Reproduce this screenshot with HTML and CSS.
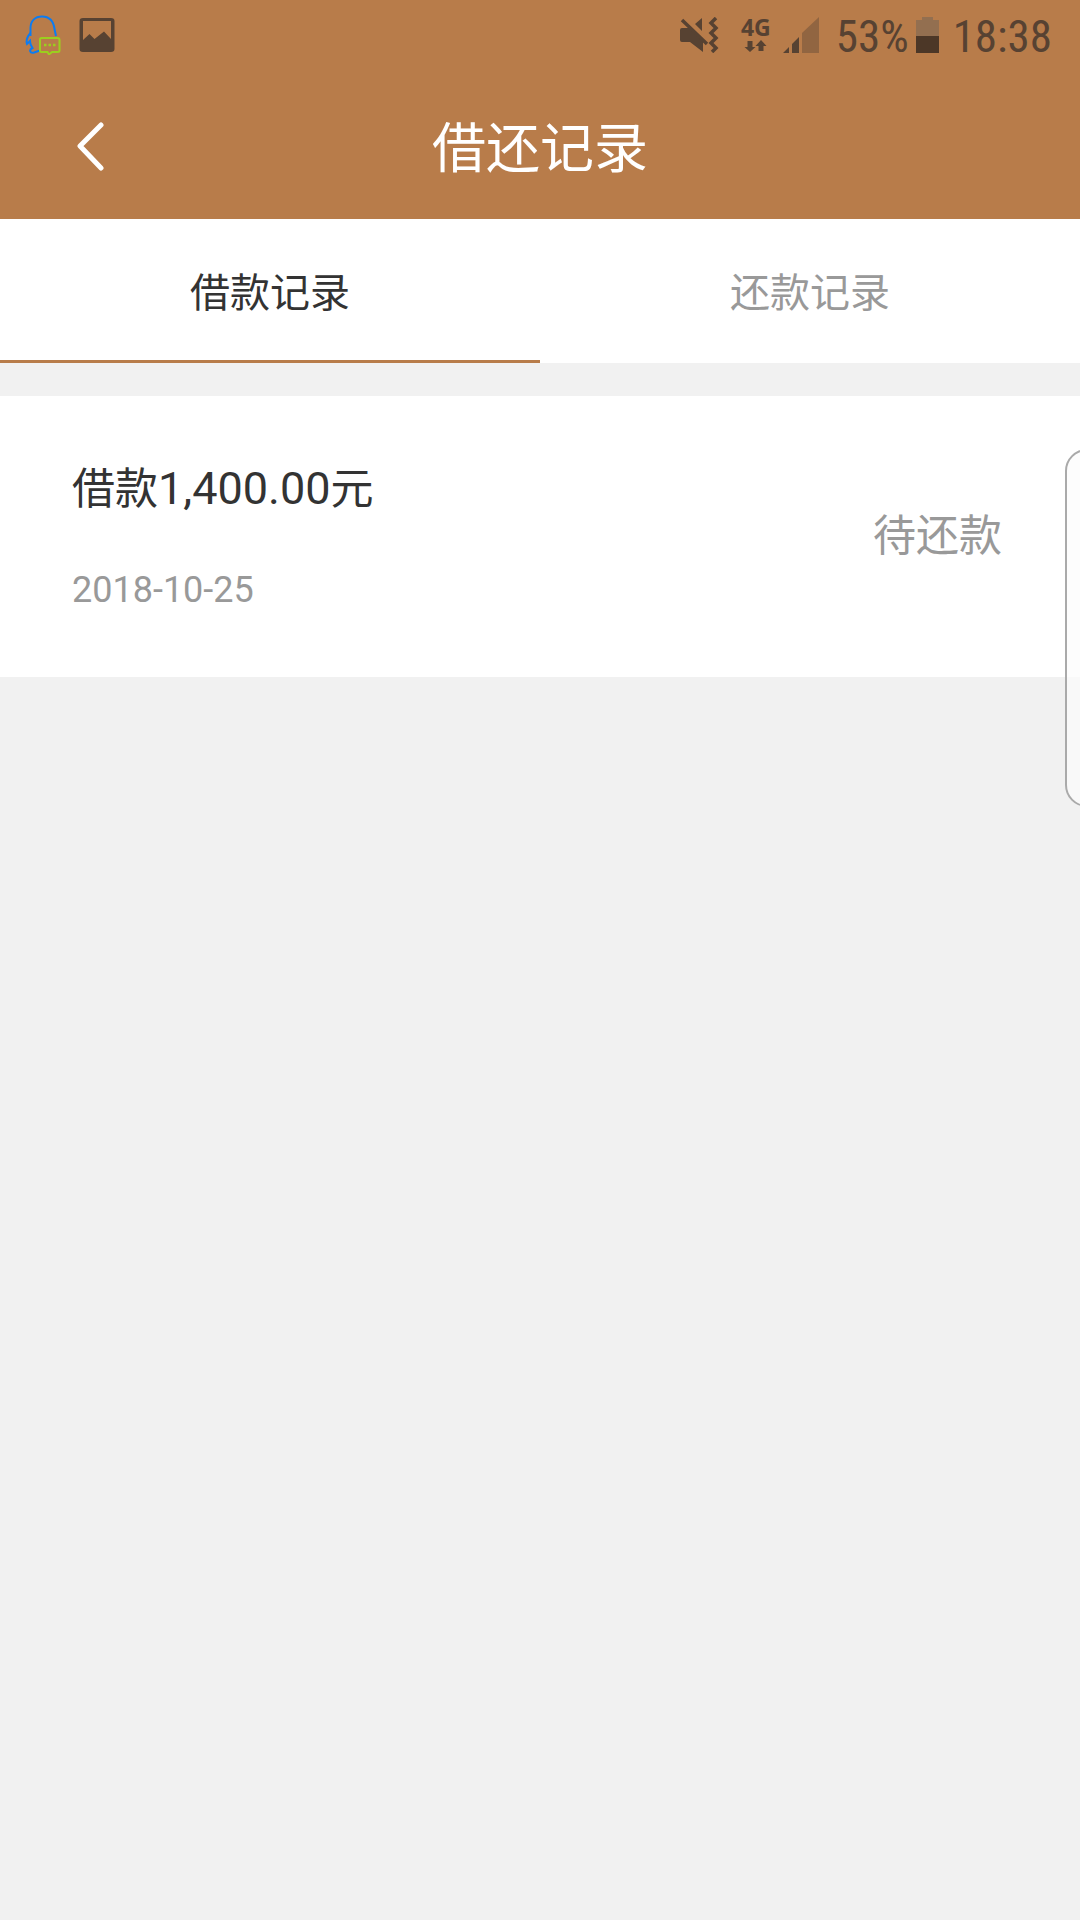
FILE: index.html
```html
<!DOCTYPE html>
<html lang="zh-CN">
<head>
<meta charset="utf-8">
<meta name="viewport" content="width=device-width, initial-scale=1">
<title>借还记录</title>
<link rel="stylesheet" href="styles.css">
</head>
<body>
<div class="top">
  <div class="status-bar">
    <div class="notices">
      <svg class="qq" width="36" height="40" viewBox="0 0 36 40" fill="none">
        <path d="M5.500 21V13C5.500 6 10 1.500 17 1.500S28.500 6 29.500 14L31 21" stroke="#0c7cf2" stroke-width="2"/>
        <path d="M5.500 18C2 22 1 26 2 29L5 26C5 29 6 31 7.500 33C3.500 35 5 38.500 9 37.500L15 35.500" stroke="#0c7cf2" stroke-width="2"/>
        <path d="M16.500 23H32.500Q34.500 23 34.500 25V35.500Q34.500 37 32.500 37H27L24 39.500L22.500 37H16.500Q15 37 15 35.500V24.500Q15 23 16.500 23Z" fill="#b87c4a" stroke="#9bcf1e" stroke-width="2"/>
        <path d="M19 30h2.500M23.500 30h2.500M28 30h2.500" stroke="#9bcf1e" stroke-width="2.500"/>
      </svg>
      <svg width="36" height="36" viewBox="0 0 36 36">
        <path fill="#574232" fill-rule="evenodd" d="M4 1H32Q35.500 1 35.500 4V32Q35.500 35 32 35H4Q.5 35 .5 32V4Q.5 1 4 1ZM4 4V23L10.500 17L15.500 22L25 14.500L32 22V4Z"/>
      </svg>
    </div>
    <div class="indicators">
      <svg class="mute" width="40" height="36" viewBox="0 0 40 36">
        <path fill="#574232" d="M3 11H10L24 24V35L11 25H3Q1 25 1 23V13Q1 11 3 11ZM16 7L23 1V14Z"/>
        <path fill="none" stroke="#574232" stroke-width="3.500" d="M3 3L28 27M37 1L32 6L37 11L32 16L37 21L32 26L37 31L33 35"/>
      </svg>
      <div class="network">
        <span class="network-type">4G</span>
        <svg width="23" height="12" viewBox="0 0 23 12">
          <path fill="#574232" d="M3.500 1H8.500V7H11.500L6 12L.5 7H3.500ZM14.500 11V6H11.500L17 0L22.500 6H19.500V11Z"/>
        </svg>
      </div>
      <svg class="signal" width="38" height="36" viewBox="0 0 38 36">
        <path fill="#574232" d="M1 36L7 30V36ZM10 27L17 20V36H10Z"/>
        <path fill="#916541" d="M20 16L37 0V36H20Z"/>
      </svg>
      <span class="reading">53%</span>
      <svg class="battery" width="23" height="36" viewBox="0 0 23 36">
        <path fill="#936f50" d="M6 0H17V3H23V19H0V3H6Z"/>
        <path fill="#4c3727" d="M0 19H23V36H0Z"/>
      </svg>
      <span class="reading">18:38</span>
    </div>
  </div>
  <header class="title-bar">
    <button class="back" type="button" aria-label="返回">
      <svg width="28" height="50" viewBox="0 0 28 50" fill="none" stroke="#fff" stroke-width="5" stroke-linecap="round" stroke-linejoin="round">
        <path d="M24 4L3 25L24 47"/>
      </svg>
    </button>
    <h1 class="title">借还记录</h1>
  </header>
</div>
<nav class="tabs">
  <button class="tab tab-active" type="button">借款记录</button>
  <button class="tab" type="button">还款记录</button>
</nav>
<main>
  <ul class="records">
    <li class="record">
      <div class="details">
        <p class="amount">借款<span class="figure">1,400.00</span>元</p>
        <time class="date" datetime="2018-10-25">2018-10-25</time>
      </div>
      <span class="state">待还款</span>
    </li>
  </ul>
</main>
<div class="edge-handle"></div>
</body>
</html>
```
FILE: styles.css
```css
* {
  box-sizing: border-box;
}

body {
  margin: 0;
  min-height: 100vh;
  background: #f1f1f1;
  color: #333;
  font-family: Roboto, "Noto Sans CJK SC", sans-serif;
  overflow-x: hidden;
}

h1, p, ul {
  margin: 0;
  padding: 0;
}

svg {
  display: block;
}

button {
  padding: 0;
  border: 0;
  background: none;
  color: inherit;
  font: inherit;
}

.top {
  background: #b87c4a;
}

.status-bar {
  display: flex;
  justify-content: space-between;
  height: 72px;
  padding: 0 28px 2px 25px;
  color: #574232;
}

.notices,
.indicators {
  display: flex;
  align-items: center;
}

.notices {
  gap: 18px;
}

.mute {
  margin-right: 22px;
}

.network {
  display: flex;
  flex-direction: column;
  align-items: center;
  gap: 2px;
  margin-right: 11px;
  padding-bottom: 2px;
}

.network-type {
  font-family: "Open Sans", sans-serif;
  font-size: 23px;
  font-weight: 700;
  line-height: 22px;
}

.signal {
  margin-right: 16px;
}

.reading {
  padding-top: 4px;
  font-family: "Roboto Condensed", Roboto, sans-serif;
  font-size: 45px;
  line-height: 64px;
}

.battery {
  margin: 0 14px 0 7px;
}

.title-bar {
  display: grid;
  grid-template-columns: 1fr auto 1fr;
  align-items: center;
  height: 147px;
  padding: 0 77px;
  color: #fff;
}

.back {
  justify-self: start;
}

.title {
  padding-top: 8px;
  font-size: 54px;
  font-weight: 400;
  line-height: 80px;
}

.tabs {
  display: grid;
  grid-template-columns: 1fr 1fr;
  background: #fff;
}

.tab {
  height: 144px;
  padding-top: 8px;
  border-bottom: 3px solid transparent;
  color: #999;
  font-size: 40px;
  line-height: 60px;
}

.tab-active {
  border-color: #b87c4a;
  color: #333;
}

.records {
  margin-top: 33px;
  list-style: none;
}

.record {
  display: flex;
  align-items: center;
  justify-content: space-between;
  padding: 57px 78px 59px 72px;
  background: #fff;
}

.details {
  display: grid;
  gap: 37px;
}

.amount {
  font-size: 43px;
  line-height: 72px;
}

.figure {
  font-size: 45px;
}

.date {
  color: #999;
  font-size: 36px;
  line-height: 56px;
}

.state {
  color: #999;
  font-size: 43px;
  line-height: 64px;
}

.edge-handle {
  position: absolute;
  top: 449px;
  right: -30px;
  width: 45px;
  height: 358px;
  border: 2px solid #aaa;
  border-radius: 22px;
  background: rgba(252, 252, 252, 0.7);
}
```
